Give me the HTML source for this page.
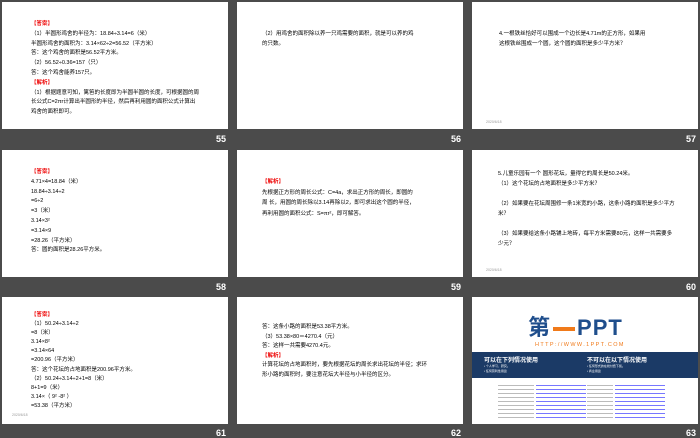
<!DOCTYPE html><html><head><meta charset="utf-8"><style>
body{margin:0;width:700px;height:438px;background:#4b4b4b;position:relative;overflow:hidden;font-family:"Liberation Sans","Noto Sans CJK SC",sans-serif}
.s{position:absolute;background:#fff;width:226px;height:127px;overflow:hidden}
.n{position:absolute;color:#fff;font-size:9px;font-weight:bold}
.t{position:absolute;font-size:5.5px;color:#000;line-height:9.8px;white-space:nowrap}
.r{color:#e00;font-weight:bold}
.d{position:absolute;font-size:3.5px;color:#999}
</style></head><body>
<div class="s" style="left:2px;top:2px"><div class="t" style="left:29px;top:18px">
<span class="r">【答案】</span><br>（1）半圆形鸡舍的半径为：18.84÷3.14=6（米）<br>半圆形鸡舍的面积为：3.14×62÷2=56.52（平方米）<br>答：这个鸡舍的面积是56.52平方米。<br>（2）56.52÷0.36=157（只）<br>答：这个鸡舍能养157只。<br><span class="r">【解析】</span><br>（1）根据题意可知，篱笆的长度即为半圆半圆的长度，可根据圆的周<br>长公式C=2πr计算出半圆形的半径，然后再利用圆的面积公式计算出<br>鸡舍的面积即可。</div></div>
<div class="n" style="left:216px;top:134px">55</div>
<div class="s" style="left:237px;top:2px"><div class="t" style="left:25px;top:28px">（2）用鸡舍的面积除以养一只鸡需要的面积，就是可以养的鸡<br>的只数。</div></div>
<div class="n" style="left:451px;top:134px">56</div>
<div class="s" style="left:472px;top:2px"><div class="t" style="left:27px;top:28px">4.一根铁丝恰好可以围成一个边长是4.71m的正方形，如果用<br>这根铁丝围成一个圆，这个圆的面积是多少平方米？</div><div class="d" style="left:14px;top:118px">2020/6/18</div></div>
<div class="n" style="left:686px;top:134px">57</div>

<div class="s" style="left:2px;top:150px"><div class="t" style="left:29px;top:18px"><span class="r">【答案】</span><br>4.71×4=18.84（米）<br>18.84÷3.14÷2<br>=6÷2<br>=3（米）<br>3.14×3²<br>=3.14×9<br>=28.26（平方米）<br>答：圆的面积是28.26平方米。</div></div>
<div class="n" style="left:216px;top:282px">58</div>
<div class="s" style="left:237px;top:150px"><div class="t" style="left:25px;top:27px;line-height:10.7px"><span class="r">【解析】</span><br>先根据正方形的周长公式：C=4a，求出正方形的周长，即圆的<br>周 长，用圆的周长除以3.14再除以2，即可求出这个圆的半径，<br>再利用圆的面积公式：S=πr²，即可解答。</div></div>
<div class="n" style="left:451px;top:282px">59</div>
<div class="s" style="left:472px;top:150px"><div class="t" style="left:26px;top:19px;line-height:10px">5.儿童乐园有一个 圆形花坛，量得它的周长是50.24米。<br>（1）这个花坛的占地面积是多少平方米？<br><br>（2）如果要在花坛周围修一条1米宽的小路，这条小路的面积是多少平方<br>米？<br><br>（3）如果要给这条小路铺上地砖，每平方米需要80元，这样一共需要多<br>少元？</div><div class="d" style="left:14px;top:118px">2020/6/18</div></div>
<div class="n" style="left:686px;top:282px">60</div>

<div class="s" style="left:2px;top:297px"><div class="t" style="left:29px;top:14px;line-height:9.1px"><span class="r">【答案】</span><br>（1）50.24÷3.14÷2<br>=8（米）<br>3.14×8²<br>=3.14×64<br>=200.96（平方米）<br>答：这个花坛的占地面积是200.96平方米。<br>（2）50.24÷3.14÷2+1=8（米）<br>8+1=9（米）<br>3.14×（ 9² -8² ）<br>=53.38（平方米）</div><div class="d" style="left:10px;top:116px">2020/6/18</div></div>
<div class="n" style="left:216px;top:428px">61</div>
<div class="s" style="left:237px;top:297px"><div class="t" style="left:25px;top:26px;line-height:9.5px">答：这条小路的面积是53.38平方米。<br>（3）53.38×80＝4270.4（元）<br>答：这样一共需要4270.4元。<br><span class="r">【解析】</span><br>计算花坛的占地面积时，要先根据花坛的周长求出花坛的半径；求环<br>形小路的面积时，要注意花坛大半径与小半径的区分。</div></div>
<div class="n" style="left:451px;top:428px">62</div>
<div class="s" style="left:472px;top:297px">
<div style="position:absolute;left:56px;top:20px;font-size:22px;font-weight:bold;color:#1f4e8c;letter-spacing:1px;line-height:22px">第<span style="display:inline-block;width:22px;height:4px;background:#f07a1a;vertical-align:middle;margin:0 2px"></span>PPT</div>
<div style="position:absolute;left:63px;top:45px;font-size:5.5px;color:#f07a1a;letter-spacing:1.4px">HTTP://WWW.1PPT.COM</div>
<div style="position:absolute;left:0;top:55px;width:226px;height:26px;background:#1b3a66;color:#fff">
<div style="position:absolute;left:12px;top:3px;font-size:6px;font-weight:bold">可以在下列情况使用</div>
<div style="position:absolute;left:115px;top:3px;font-size:6px;font-weight:bold">不可以在以下情况使用</div>
<div style="position:absolute;left:12px;top:12px;font-size:3px;line-height:5px">• 个人学习、研究。<br>• 任何营利性用途</div>
<div style="position:absolute;left:115px;top:12px;font-size:3px;line-height:5px">• 任何形式的在线付费下载。<br>• 商业用途</div></div>
<div style="position:absolute;left:26px;top:87px;width:36px;height:34px;background:repeating-linear-gradient(#fff 0 1px,#bbb 1px 2px,#fff 2px 4px)"></div>
<div style="position:absolute;left:64px;top:87px;width:50px;height:34px;background:repeating-linear-gradient(#fff 0 1px,#77f 1px 2px,#fff 2px 4px)"></div>
<div style="position:absolute;left:115px;top:87px;width:26px;height:34px;background:repeating-linear-gradient(#fff 0 1px,#bbb 1px 2px,#fff 2px 4px)"></div>
<div style="position:absolute;left:143px;top:87px;width:50px;height:34px;background:repeating-linear-gradient(#fff 0 1px,#77f 1px 2px,#fff 2px 4px)"></div>
</div>
<div class="n" style="left:686px;top:428px">63</div>
</body></html>
